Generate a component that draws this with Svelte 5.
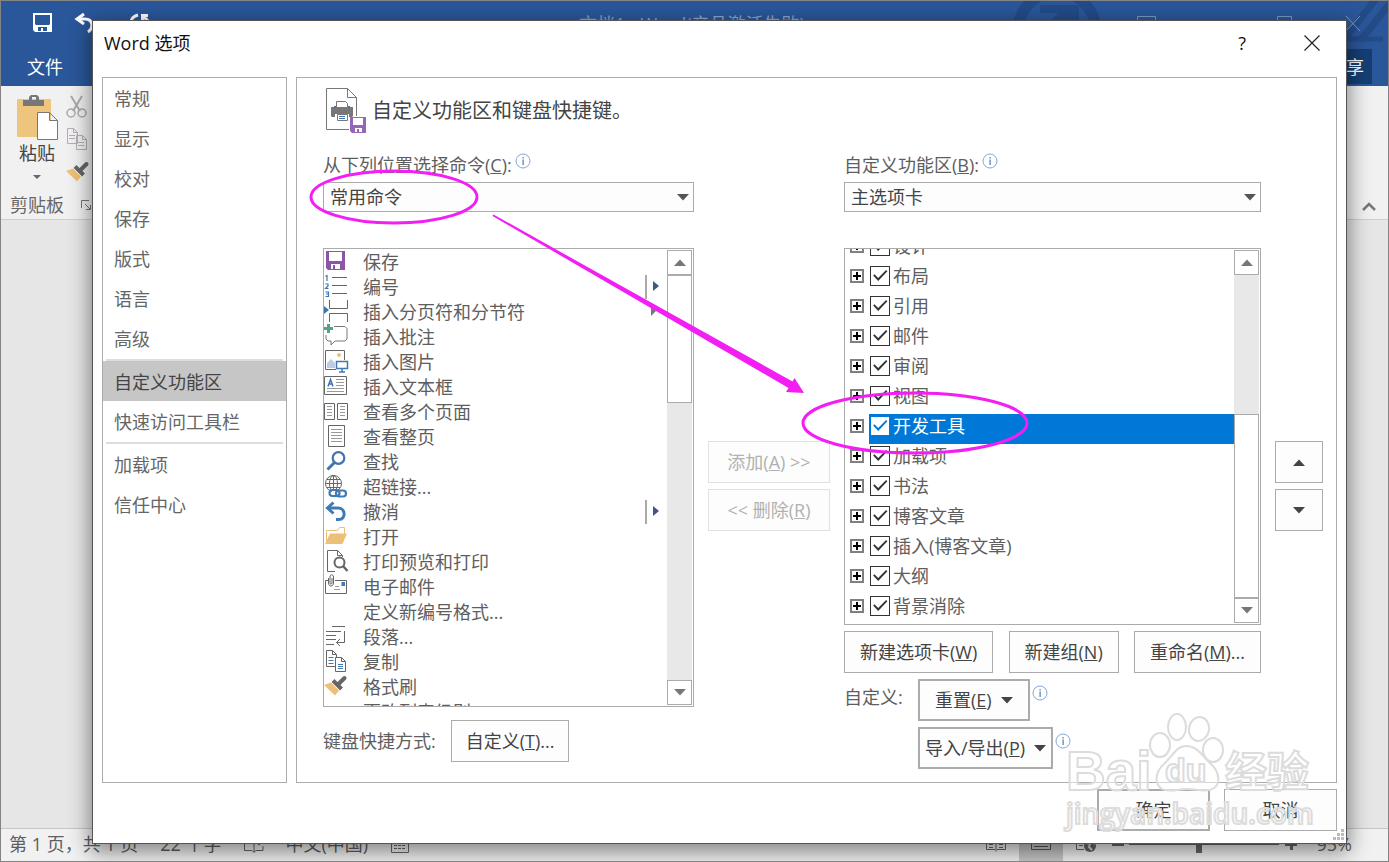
<script>
  const navGroups = [
    ['常规', '显示', '校对', '保存', '版式', '语言', '高级'],
    ['自定义功能区', '快速访问工具栏'],
    ['加载项', '信任中心'],
  ];

  const commands = [
    { icon: 'save', label: '保存' },
    { icon: 'numbering', label: '编号', split: true },
    { icon: 'pageBreak', label: '插入分页符和分节符', menu: true },
    { icon: 'comment', label: '插入批注' },
    { icon: 'picture', label: '插入图片' },
    { icon: 'textBox', label: '插入文本框' },
    { icon: 'pages', label: '查看多个页面' },
    { icon: 'page', label: '查看整页' },
    { icon: 'find', label: '查找' },
    { icon: 'link', label: '超链接...' },
    { icon: 'undo', label: '撤消', split: true },
    { icon: 'open', label: '打开' },
    { icon: 'preview', label: '打印预览和打印' },
    { icon: 'mail', label: '电子邮件' },
    { icon: '', label: '定义新编号格式...' },
    { icon: 'paragraph', label: '段落...' },
    { icon: 'copy', label: '复制' },
    { icon: 'brush', label: '格式刷' },
    { icon: 'level', label: '更改列表级别', menu: true },
  ];

  let tabs = $state(
    ['设计', '布局', '引用', '邮件', '审阅', '视图', '开发工具', '加载项', '书法', '博客文章', '插入(博客文章)', '大纲', '背景消除'].map(
      (label) => ({ label, checked: true })
    )
  );

  let activeNav = $state('自定义功能区');
  let activeTab = $state('开发工具');

  // Inner markup of the 24x25 command icons
  const icons = {
    save: `<path fill="#8b55aa" fill-rule="evenodd" d="M2 1h19v19H4l-2-2zM5 2v9h13V2zM7 14v5h2v-4h2v4h5v-5z"/>`,
    numbering: `<g fill="none" stroke="#3f74b0" stroke-width="1.2"><path d="M1.500 1.500L3 .5V6M1.500 9h2.500v2L1.500 13.500h3M1.500 17h3v4.500h-3M2 19h2.500"/></g><path stroke="#666" d="M8 2.500h15M8 10.500h15M8 18.500h15"/>`,
    pageBreak: `<path fill="#3f74b0" d="M0 6l5 4-5 4z"/><path fill="none" stroke="#666" d="M5.500 0v8.500h18V0M5.500 22v-8.500h18V22"/>`,
    comment: `<path fill="none" stroke="#777" d="M10 1.500h11l2 2V14l-2 2H11l-4 4v-4H4l-2-2v-4"/><path fill="#55a08a" d="M3 -1h3v3h3v3H6v3H3V5H0V2h3z"/>`,
    picture: `<path fill="none" stroke="#666" d="M12 19.500H1.500v-19h19V10"/><circle cx="15" cy="5" r="2" fill="#edc07a"/><path fill="#bccde3" d="M3 18v-5l4-4 4 4v5z"/><path fill="#fff" stroke="#3f7ab5" stroke-width="1.500" d="M12.500 11.500h11v7h-11zM18 19v3M15 22h6"/>`,
    textBox: `<path fill="none" stroke="#666" d="M.5 1.500h22v18H.5z"/><path fill="none" stroke="#3f74b0" stroke-width="1.500" d="M4 11.500L6.500 4.500 9 11.500M5 9h3"/><path stroke="#999" d="M12 4.500h8M12 7.500h8M12 10.500h8M3 13.500h17M3 16.500h17"/>`,
    pages: `<path fill="none" stroke="#666" d="M.5 3.500h10v16H.5zM13.500 3.500h10v16h-10z"/><path stroke="#999" d="M3 6.500h5M3 9.500h5M3 12.500h5M3 15.500h5M16 6.500h5M16 9.500h5M16 12.500h5M16 15.500h5"/>`,
    page: `<path fill="none" stroke="#666" d="M4.500 .5h16v21h-16z"/><path stroke="#999" d="M7 4.500h11M7 7.500h11M7 10.500h11M7 13.500h11M7 16.500h11"/>`,
    find: `<g fill="none" stroke="#3f74b0"><circle cx="14.500" cy="8" r="5.800" stroke-width="2.200"/><path stroke-width="3" d="M10.500 12.500L3.500 19.500"/></g>`,
    link: `<g fill="none" stroke="#666"><circle cx="9.500" cy="8.500" r="8"/><ellipse cx="9.500" cy="8.500" rx="4" ry="8"/><path d="M9.500 0v16M1.500 8.500h16M3 4.500h13M3 12.500h13"/></g><g fill="none"><path stroke="#fff" stroke-width="6" d="M8 19h14"/><g stroke="#3f7ab5" stroke-width="2.200"><rect x="5.500" y="15" width="10" height="6" rx="3"/><rect x="12" y="15.500" width="10" height="6" rx="3"/></g></g>`,
    undo: `<path fill="none" stroke="#3f7ab5" stroke-width="3" d="M12 19.500h3c7 0 7-11.500-1-11.500H5"/><path fill="none" stroke="#3f7ab5" stroke-width="3" d="M9.500 2.500L3.500 8l6 5.500"/>`,
    open: `<path fill="#fff" stroke="#edc07a" d="M2.500 17V5.500h11l2-3h5V12"/><path fill="#edc07a" d="M1 19L6 8.500h17L18.500 19z"/>`,
    preview: `<path fill="none" stroke="#666" d="M11 21.500H3.500V.5h10l5 5V7M13.500.5v5h5"/><circle cx="15.500" cy="12.500" r="5" fill="#fff" stroke="#666" stroke-width="2"/><path stroke="#666" stroke-width="2.500" d="M19 16l4.500 5"/>`,
    mail: `<path fill="none" stroke="#666" d="M4 5.500H1.500v13h21v-13H11"/><path fill="none" stroke="#666" d="M4.500 3v5c0 4 5 4 5 0V2c0-3-3.500-3-3.500 0v6c0 1.500 2 1.500 2 0V3"/><path fill="#3f7ab5" d="M17.500 7h3.500v4h-3.500z"/><path stroke="#999" d="M11 11.500h4M10 14.500h6"/>`,
    paragraph: `<path fill="none" stroke="#666" d="M8 1.500h13M2 6.500h15M2 10.500h10M2 14.500h10M2 19.500h8M20.500 6v11.500h-8M16 14l-3.500 3.500 3.500 3.500"/>`,
    copy: `<g fill="#fff" stroke="#666"><path d="M2.500 .5h6l4 4v12h-10zM8.500.5v4h4"/><path d="M11.500 7.500h6l4 4v10h-10zM17.500 7.500v4h4"/></g><path stroke="#3f7ab5" d="M4.500 7.500h5M4.500 10.500h5M4.500 13.500h5M14 14.500h5M14 16.500h5M14 18.500h5"/>`,
    brush: `<path fill="#edc07a" d="M0 10l7-2.500 8 8-4 5z"/><path stroke="#fff" d="M7 7l9 9"/><path stroke="#666" stroke-width="4" d="M9 5.500l8.500 8.500"/><path stroke="#666" stroke-width="4" stroke-linecap="round" d="M14.500 9l6-6"/>`,
    level: `<path fill="#666" d="M8 6h12v2H8zM8 11h12v2H8z"/>`,
  };
</script>

{#snippet icon(name)}
  <svg class="icon" width="24" height="25" viewBox="0 0 24 25" aria-hidden="true">{@html icons[name] ?? ''}</svg>
{/snippet}

{#snippet arrow(flip = false)}
  <svg class="arrow" class:flip width="12" height="7" viewBox="0 0 12 7" aria-hidden="true"><path fill="currentColor" d="M0 0h12L6 6.500z" /></svg>
{/snippet}

{#snippet info()}
  <svg class="info" width="16" height="16" viewBox="0 0 16 16" aria-hidden="true">
    <circle cx="8" cy="8" r="7" fill="none" stroke="#84a7d8" />
    <path fill="#4d79b5" d="M7.500 4h1.200v1.500H7.500zM7.500 6.500h1.200V12H7.500z" />
  </svg>
{/snippet}

{#snippet scrollbar(before, thumb, after)}
  <div class="scrollbar">
    <button class="scroll-button" aria-label="向上滚动">{@render arrow(true)}</button>
    <div style:flex-grow={before}></div>
    <div class="thumb" style:flex-grow={thumb}></div>
    <div style:flex-grow={after}></div>
    <button class="scroll-button" aria-label="向下滚动">{@render arrow()}</button>
  </div>
{/snippet}

<div class="window">
  <header class="word-header">
    <svg class="decoration" width="380" height="85" viewBox="0 0 380 85" aria-hidden="true">
      <g fill="none" stroke="#234b88">
        <circle cx="49" cy="30" r="39" stroke-width="11" />
        <path stroke-width="7" d="M330 46L371 -6M352 40L391 -9" />
        <path stroke-width="5" d="M336 38h39" />
      </g>
      <path fill="#234b88" d="M32 4h39v34H60V18L44 34l-8-8 14-14H32z" />
    </svg>
    <div class="quick-bar">
      <svg width="150" height="24" viewBox="0 0 150 24" aria-hidden="true">
        <path fill="#fff" fill-rule="evenodd" d="M1 1h19v19H3l-2-2zM3 3v9l1 1h13l1-1V3zM6 15v4h3v-3h2v3h4v-4z" />
        <g fill="none" stroke="#fff" stroke-width="3">
          <path d="M52 2l-7 5 7 5M45 7h8c8 0 9 9 3 13" />
          <path d="M106 3c-9 2-10 14-2 17M109 3.500h7M110.500 2v9M110 3l9 9" />
        </g>
        <path fill="#a8b9d5" d="M145 8h7v2h-7z" />
      </svg>
      <span class="document-title">文档1 - Word(产品激活失败)</span>
      <svg class="window-buttons" width="224" height="20" viewBox="0 0 224 20" fill="none" stroke="#7f99c2" aria-hidden="true">
        <path d="M-.5 4.500h18v13h-18zM-.5 8.500h18M139.500 4.500h14v14h-14zM208 4l14 15M222 4l-14 15" />
      </svg>
    </div>
    <div class="ribbon-tabs">
      <button class="file-tab">文件</button>
      <button class="share">共享</button>
    </div>
  </header>

  <section class="ribbon">
    <div class="clipboard">
      <button class="paste">
        <svg width="42" height="46" viewBox="0 0 42 46" aria-hidden="true">
          <rect x="1" y="4" width="34" height="38" rx="1" fill="#edc57d" />
          <path fill="#777" fill-rule="evenodd" d="M7 5h6V2l2-2h6l2 2v3h5v6H7zM16 2v3h4V2z" />
          <path fill="#fff" stroke="#777" d="M21.500 17.500h12l8 8v19h-20zM33.500 17.500v8h8" />
        </svg>
        粘贴
        <svg width="8" height="4" viewBox="0 0 8 4" aria-hidden="true"><path fill="#666" d="M0 0h8L4 4z" /></svg>
      </button>
      <div class="small-tools">
        <svg width="22" height="24" viewBox="0 0 22 24" fill="none" stroke="#aaa" aria-hidden="true">
          <path stroke-width="2" d="M5 1l9 15M16 1L7 16" />
          <circle cx="5" cy="18" r="4" stroke-width="1.500" /><circle cx="16" cy="18" r="4" stroke-width="1.500" />
        </svg>
        <svg width="22" height="24" viewBox="0 0 22 24" fill="#f1f1f1" stroke="#b5adb8" aria-hidden="true">
          <path d="M1.500 .5h6l4 4v11h-10zM7.500 .5v4h4M3 7.500h6M3 10.500h6M10.500 7.500h6l4 4v10h-10zM16.500 7.500v4h4M12 14.500h6M12 17.500h6" />
        </svg>
        {@render icon('brush')}
      </div>
    </div>
    <div class="group-label">
      剪贴板
      <svg width="10" height="10" viewBox="0 0 10 10" aria-hidden="true"><path fill="none" stroke="#777" d="M.5 8V.5H8M4 4l5 5M9.500 5v4.500H5" /></svg>
    </div>
    <svg class="collapse" width="16" height="10" viewBox="0 0 16 10" aria-hidden="true"><path fill="none" stroke="#777" stroke-width="2.500" d="M2 8l6-6 6 6" /></svg>
  </section>

  <main class="document"></main>

  <footer class="status-bar">
    <span>第 1 页，共 1 页</span>
    <span>22 个字</span>
    <svg width="20" height="18" viewBox="0 0 20 18" fill="none" stroke="#666" aria-hidden="true"><path d="M8 3.500H.5v12H8l2 2V5zM10 17l2-1.500h7V11" /><path stroke-width="2" d="M12 6l3 3 4-5" /></svg>
    <span>中文(中国)</span>
    <svg width="20" height="18" viewBox="0 0 20 18" fill="none" stroke="#666" aria-hidden="true"><path d="M1.500 3.500h17v14h-17zM1 6.500h17" /><path d="M4 10.500h12M4 13.500h12" stroke-dasharray="3 1" /></svg>
    <div class="view-tools">
      <svg width="20" height="18" viewBox="0 0 20 18" fill="none" stroke="#666" aria-hidden="true"><path d="M10 3.500v13M9 3.500H.5v11H9M11 3.500h8.500v11H11M3 6.500h4M3 9.500h4M3 12.500h4M13 6.500h4M13 9.500h4M13 12.500h4" /></svg>
      <span class="current-view">
        <svg width="20" height="18" viewBox="0 0 20 18" fill="none" stroke="#555" aria-hidden="true"><path d="M.5 1.500h19v13H.5zM3 5.500h14M3 8.500h14M3 11.500h14" /></svg>
      </span>
      <svg width="20" height="18" viewBox="0 0 20 18" aria-hidden="true"><path fill="none" stroke="#666" d="M8 14.500H.5v-12H12M3 6.500h6M3 10.500h4" /><circle cx="14" cy="11" r="6" fill="#666" /><path fill="none" stroke="#ddd" stroke-width="2" d="M10 8l4 1-1 3 3 3M15 6l4 3" /></svg>
      <span class="zoom-slider">
        <svg width="186" height="18" viewBox="0 0 186 18" aria-hidden="true"><path fill="#666" d="M0 8h12v3H0zM17 9h150v1H17zM84 2h6v16h-6zM173 8h12v3h-12zM178 3h3v12h-3z" /></svg>
      </span>
      <span>95%</span>
    </div>
  </footer>

  <div class="dialog" role="dialog" aria-labelledby="dialog-title">
    <div class="dialog-title">
      <h1 id="dialog-title">Word 选项</h1>
      <button class="help">?</button>
      <button aria-label="关闭">
        <svg width="16" height="16" viewBox="0 0 16 16" aria-hidden="true"><path stroke="#222" stroke-width="1.200" d="M.5 .5l15 15M15.500 .5l-15 15" /></svg>
      </button>
    </div>

    <div class="dialog-body">
      <nav>
        {#each navGroups as group}
          <div class="nav-group">
            {#each group as item}
              <button class:active={activeNav === item} onclick={() => (activeNav = item)}>{item}</button>
            {/each}
          </div>
        {/each}
      </nav>

      <section class="panel">
        <div class="heading">
          <svg width="42" height="48" viewBox="0 0 42 48" aria-hidden="true">
            <path fill="none" stroke="#777" d="M23 42.500H.5V1.500h21l9 9V29M21.500 1.500v9h9" />
            <path fill="#777" d="M5 20h22v9l-1 1h-3v-3H9v3H6l-1-1z" />
            <path fill="#fff" stroke="#777" d="M10.500 14.500h9l2 2v4h-11z" />
            <path fill="#3f74b0" d="M8 19h2v2H8zM22 19h2v2h-2z" />
            <path fill="#fff" stroke="#777" d="M11.500 27.500h10v6h-10z" /><path stroke="#3f74b0" d="M13 29.500h6M13 31.500h6" />
            <path fill="#9667b8" fill-rule="evenodd" d="M24 30h16v16H26l-2-2zM27 31v7h10v-7zM29 41v4h2v-3h2v3h3v-4z" />
          </svg>
          <h2>自定义功能区和键盘快捷键。</h2>
        </div>

        <div class="columns">
          <div class="column">
            <div class="field-label"><label for="source">从下列位置选择命令(<u>C</u>):</label>{@render info()}</div>
            <div class="select-box">
              <select id="source"><option>常用命令</option><option>所有命令</option></select>
              {@render arrow()}
            </div>
            <div class="list">
              <ul class="commands">
                {#each commands as command}
                  <li>
                    {@render icon(command.icon)}
                    <span>{command.label}</span>
                    {#if command.split}
                      <svg class="marker" width="14" height="24" viewBox="0 0 14 24" aria-hidden="true"><path fill="#aaa" d="M0 0h2v24H0z" /><path fill="#3f5687" d="M8 6l6 5-6 5z" /></svg>
                    {:else if command.menu}
                      <svg class="marker" width="14" height="24" viewBox="0 0 14 24" aria-hidden="true"><path fill="#777" d="M6 6l5 5-5 5z" /></svg>
                    {/if}
                  </li>
                {/each}
              </ul>
              {@render scrollbar(0, 127, 278)}
            </div>
            <div class="keyboard-row">
              <span>键盘快捷方式:</span>
              <button class="push">自定义(<u>T</u>)...</button>
            </div>
          </div>

          <div class="side-buttons">
            <button class="push" disabled>添加(<u>A</u>) &gt;&gt;</button>
            <button class="push" disabled>&lt;&lt; 删除(<u>R</u>)</button>
          </div>

          <div class="column">
            <div class="field-label"><label for="target">自定义功能区(<u>B</u>):</label>{@render info()}</div>
            <div class="select-box">
              <select id="target"><option>主选项卡</option><option>所有选项卡</option></select>
              {@render arrow()}
            </div>
            <div class="list">
              <ul class="tabs">
                {#each tabs as tab}
                  <li>
                    <button class="expander" aria-label="展开 {tab.label}">
                      <svg width="14" height="14" viewBox="0 0 14 14" aria-hidden="true"><path fill="#fff" stroke="#808080" stroke-width="2" d="M1 1h12v12H1z" /><path stroke="#000" stroke-width="2" d="M3 7h8M7 3v8" /></svg>
                    </button>
                    <label class:selected={activeTab === tab.label}>
                      <input type="checkbox" bind:checked={tab.checked} onclick={() => (activeTab = tab.label)} />
                      {tab.label}
                    </label>
                  </li>
                {/each}
              </ul>
              {@render scrollbar(140, 184, 0)}
            </div>
            <div class="tab-actions">
              <button class="push">新建选项卡(<u>W</u>)</button>
              <button class="push">新建组(<u>N</u>)</button>
              <button class="push">重命名(<u>M</u>)...</button>
            </div>
            <div class="custom-grid">
              <span>自定义:</span>
              <div><button class="push menu-button">重置(<u>E</u>) {@render arrow()}</button>{@render info()}</div>
              <div class="second"><button class="push menu-button wide">导入/导出(<u>P</u>) {@render arrow()}</button>{@render info()}</div>
            </div>
          </div>

          <div class="side-buttons">
            <button class="push" aria-label="上移">{@render arrow(true)}</button>
            <button class="push" aria-label="下移">{@render arrow()}</button>
          </div>
        </div>
      </section>
    </div>

    <div class="dialog-footer">
      <button class="push default">确定</button>
      <button class="push">取消</button>
    </div>

    <svg class="grip" width="12" height="12" viewBox="0 0 12 12" aria-hidden="true"><path fill="#bbb" d="M8 0h3v3H8zM4 4h3v3H4zM8 4h3v3H8zM0 8h3v3H0zM4 8h3v3H4zM8 8h3v3H8z" /></svg>

    <svg class="annotation" width="740" height="300" viewBox="300 165 740 300" fill="none" stroke="#f31ef3" stroke-width="3" aria-hidden="true">
      <ellipse cx="394" cy="197" rx="83" ry="26" />
      <ellipse cx="915" cy="423" rx="112" ry="30" />
      <path fill="#f31ef3" stroke="none" d="M493.500 214.500L792.500 381.500l2-3.500 9.500 15-18-1 2.500-4L492.500 216z" />
    </svg>
  </div>

  <svg class="watermark" width="260" height="130" viewBox="0 0 260 130" aria-hidden="true">
    <g fill="#fff" fill-opacity="0.5" stroke="#dcdcdc" stroke-width="2">
      <text class="brand" x="6" y="83" font-size="55">Bai</text>
      <ellipse cx="100" cy="38" rx="10" ry="12" /><ellipse cx="117" cy="20" rx="9" ry="13" />
      <ellipse cx="139" cy="22" rx="10" ry="12" transform="rotate(12 139 22)" /><ellipse cx="153" cy="43" rx="10" ry="12" />
      <path d="M126 39c-10 0-13 10-22 18s-10 20-2 25c7 4 15 0 25 0s20 4 27-1 5-17-3-24-13-18-25-18z" />
      <text class="brand" x="105" y="75" font-size="34">du</text>
      <text class="brand" x="165" y="80" font-size="42">经验</text>
      <text class="address" x="6" y="117" font-size="28">jingyan.baidu.com</text>
    </g>
  </svg>
</div>

<style>
  :global(body) {
    margin: 0;
  }

  .window {
    position: relative;
    display: flex;
    flex-direction: column;
    box-sizing: border-box;
    min-height: 100vh;
    border: 1px solid #848484;
    overflow: hidden;
    background: #e6e6e6;
    color: #5e5e5e;
    font-family: 'Open Sans', 'Noto Sans CJK SC', sans-serif;
    font-size: 18px;
    line-height: 24px;
  }

  .window *,
  .window *::before {
    box-sizing: border-box;
  }

  svg {
    display: block;
    flex-shrink: 0;
  }

  button {
    padding: 0;
    border: none;
    background: none;
    color: inherit;
    font: inherit;
    white-space: nowrap;
  }

  h1,
  h2,
  ul {
    margin: 0;
    padding: 0;
    font-weight: normal;
  }

  /* Word window behind the dialog */
  .word-header {
    position: relative;
    background: #2a579a;
    color: #fff;
  }

  .decoration {
    position: absolute;
    top: 0;
    right: 0;
  }

  .quick-bar {
    position: relative;
    display: flex;
    height: 48px;
    padding: 11px 26px 0 31px;
  }

  .quick-bar svg {
    overflow: visible;
  }

  .document-title {
    flex: 1;
    padding-left: 64px;
    color: #8ba5cd;
    text-align: center;
    white-space: nowrap;
  }

  .ribbon-tabs {
    position: relative;
    display: flex;
    justify-content: space-between;
    height: 37px;
    padding: 0 16px 2px 0;
  }

  .file-tab {
    padding: 0 26px;
  }

  .share {
    padding: 0 8px 0 32px;
    background: #153f74;
  }

  .ribbon {
    position: relative;
    height: 134px;
    padding-top: 9px;
    border-bottom: 1px solid #cfcfcf;
    background: #f1f1f1;
  }

  .clipboard {
    display: flex;
    gap: 8px;
    padding-left: 15px;
    color: #444;
  }

  .paste {
    display: flex;
    flex-direction: column;
    align-items: center;
    height: 98px;
  }

  .paste svg:last-child {
    margin-top: 10px;
  }

  .small-tools {
    display: flex;
    flex-direction: column;
    gap: 9px;
    height: 98px;
  }

  .group-label {
    display: flex;
    align-items: center;
    gap: 17px;
    padding-left: 9px;
    color: #666;
  }

  .collapse {
    position: absolute;
    right: 11px;
    bottom: 7px;
  }

  .document {
    flex: 1;
  }

  .status-bar {
    display: flex;
    align-items: center;
    gap: 22px;
    height: 33px;
    padding: 0 36px 2px 8px;
    border-top: 1px solid #c6c6c6;
    background: #f1f1f1;
  }

  .view-tools {
    display: flex;
    align-items: center;
    gap: 13px;
    height: 100%;
    margin-left: auto;
  }

  .current-view {
    display: flex;
    align-items: center;
    height: 34px;
    padding: 0 12px;
    background: #c6c6c6;
  }

  .zoom-slider {
    padding: 0 6px 0 3px;
  }

  /* Options dialog */
  .dialog {
    position: absolute;
    inset: 19px 41px 17px 91px;
    display: flex;
    flex-direction: column;
    gap: 6px;
    padding: 0 9px 12px;
    border: 1px solid #555;
    background: #fff;
    box-shadow: 0 6px 20px 2px rgba(0, 0, 0, 0.45);
  }

  .dialog-title {
    display: flex;
    align-items: center;
    gap: 58px;
    height: 50px;
    padding: 0 17px 7px 2px;
    color: #111;
  }

  .dialog-title h1 {
    flex: 1;
    font-size: 18px;
  }

  .dialog-body {
    display: flex;
    flex: 1;
    gap: 9px;
    min-height: 0;
  }

  nav {
    flex: 0 0 185px;
    border: 1px solid #ababab;
  }

  .nav-group {
    display: flex;
    flex-direction: column;
  }

  .nav-group + .nav-group::before {
    content: '';
    height: 3px;
    margin: 0 3px;
    border-bottom: 2px solid #ddd;
  }

  nav button {
    height: 40px;
    padding: 1px 11px 0;
    color: #666;
    text-align: left;
  }

  nav button.active {
    background: #c6c6c6;
    color: #444;
  }

  .panel {
    display: flex;
    flex: 1;
    flex-direction: column;
    min-width: 0;
    padding: 9px 13px 13px 26px;
    border: 1px solid #ababab;
  }

  .heading {
    display: flex;
    gap: 4px;
    padding-left: 3px;
    color: #444;
  }

  .heading h2 {
    font-size: 20px;
    line-height: 48px;
  }

  .columns {
    display: grid;
    flex: 1;
    grid-template-columns: 371fr 122px 417fr 48px;
    gap: 14px;
    min-height: 0;
    padding-top: 17px;
  }

  .column {
    display: flex;
    flex-direction: column;
    min-width: 0;
    min-height: 0;
  }

  .field-label {
    display: flex;
    align-items: flex-start;
    gap: 3px;
    height: 30px;
    padding-top: 1px;
    white-space: nowrap;
  }

  .select-box {
    position: relative;
    margin-bottom: 36px;
    color: #555;
  }

  select {
    display: block;
    width: 100%;
    height: 30px;
    padding: 0 6px;
    border: 1px solid #ababab;
    border-radius: 0;
    appearance: none;
    background: #fdfdfd;
    color: #444;
    font: inherit;
  }

  .select-box .arrow {
    position: absolute;
    top: 12px;
    right: 5px;
  }

  .flip {
    transform: rotate(180deg);
  }

  .list {
    display: flex;
    flex: 1;
    min-height: 0;
    padding-right: 1px;
    border: 1px solid #ababab;
    overflow: hidden;
  }

  .list ul {
    display: flex;
    flex: 1;
    flex-direction: column;
    min-width: 0;
    overflow: hidden;
    list-style: none;
  }

  li {
    display: flex;
    flex-shrink: 0;
    align-items: center;
    white-space: nowrap;
  }

  .commands {
    padding-top: 1px;
  }

  .commands li {
    align-items: flex-start;
    gap: 15px;
    height: 25px;
    padding-right: 8px;
    line-height: 25px;
  }

  .commands .icon {
    overflow: visible;
  }

  .marker {
    margin-left: auto;
  }

  .tabs {
    justify-content: flex-end;
  }

  .tabs li {
    height: 30px;
    padding-left: 5px;
    gap: 5px;
  }

  .expander {
    height: 14px;
    margin-bottom: 6px;
  }

  .tabs label {
    display: flex;
    flex: 1;
    align-items: center;
    gap: 3px;
    height: 30px;
    padding: 0 0 7px 1px;
  }

  .tabs label.selected {
    background: #0078d7;
    color: #fff;
  }

  input[type='checkbox'] {
    width: 20px;
    height: 20px;
    margin: 0;
    border: 1px solid #333;
    appearance: none;
    background: #fff;
    color: #333;
  }

  input[type='checkbox']:checked::before {
    content: '';
    display: block;
    height: 18px;
    background: currentColor;
    clip-path: polygon(12% 50%, 19% 43%, 40% 64%, 84% 20%, 91% 27%, 40% 80%);
  }

  .selected input[type='checkbox'] {
    border-color: #0078d7;
    color: #0078d7;
  }

  .scrollbar {
    display: flex;
    flex: 0 0 25px;
    flex-direction: column;
    margin: 1px 0;
    background: #e8e8e8;
  }

  .scroll-button {
    display: flex;
    align-items: center;
    justify-content: center;
    height: 25px;
    border: 1px solid #ababab;
    background: #fff;
    color: #777;
  }

  .thumb {
    border: 1px solid #ababab;
    background: #fff;
  }

  .push {
    height: 42px;
    padding: 0 14px;
    border: 1px solid #ababab;
    background: #fdfdfd;
    color: #444;
  }

  .push:disabled {
    border-color: #e1e1e1;
    color: #b1b1b1;
  }

  .keyboard-row {
    display: flex;
    align-items: center;
    gap: 15px;
    padding: 13px 0 7px;
  }

  .side-buttons {
    display: flex;
    flex-direction: column;
    gap: 6px;
    padding-top: 289px;
  }

  .side-buttons .push {
    display: block;
    padding: 0;
  }

  .side-buttons .arrow {
    margin: 0 auto;
  }

  .tab-actions {
    display: flex;
    justify-content: space-between;
    padding: 6px 0;
  }

  .tab-actions .push {
    padding: 0 15px;
  }

  .custom-grid {
    display: grid;
    grid-template-columns: 74px 1fr;
    row-gap: 6px;
    line-height: 36px;
  }

  .custom-grid > div {
    display: flex;
    gap: 2px;
  }

  .second {
    grid-column: 2;
  }

  .custom-grid .info {
    margin-top: 6px;
  }

  .menu-button {
    display: flex;
    align-items: center;
    padding: 0 15px;
    border-width: 2px;
  }

  .menu-button .arrow {
    margin-left: 9px;
  }

  .wide {
    padding: 0 5px;
  }

  .dialog-footer {
    display: flex;
    justify-content: flex-end;
    gap: 14px;
  }

  .dialog-footer .push {
    width: 113px;
  }

  .default {
    border-width: 2px;
  }

  .grip {
    position: absolute;
    right: 1px;
    bottom: 2px;
  }

  .annotation {
    position: absolute;
    top: 144px;
    left: 207px;
    pointer-events: none;
  }

  .watermark {
    position: absolute;
    right: 68px;
    bottom: 24px;
    pointer-events: none;
  }

  .brand {
    font-family: 'Liberation Sans', 'Noto Sans CJK SC', sans-serif;
    font-weight: bold;
  }

  .address {
    font-weight: 600;
  }
</style>
